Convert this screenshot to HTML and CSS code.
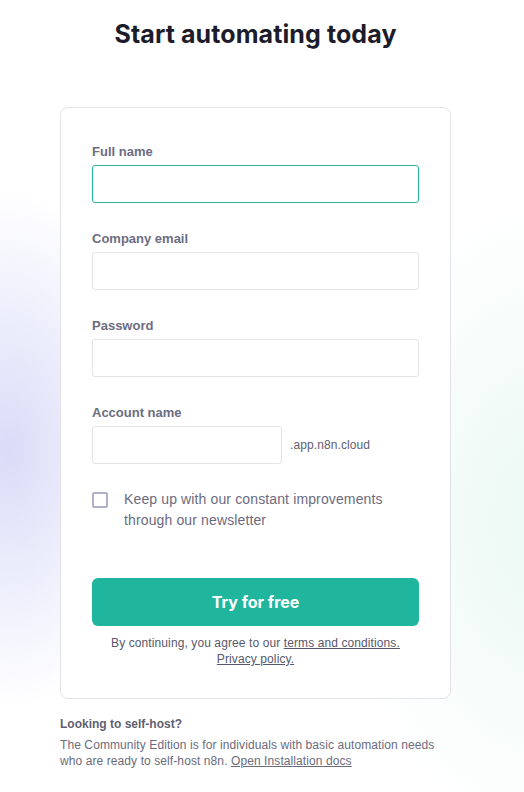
FILE: index.html
```html
<!DOCTYPE html>
<html lang="en">
<head>
<meta charset="utf-8">
<title>Start automating today</title>
<link rel="stylesheet" href="styles.css">
</head>
<body>
<main class="page">
  <h1 class="title">Start automating today</h1>
  <form class="card">
    <div class="field">
      <label class="label" for="fn">Full name</label>
      <input class="input input-focus" id="fn" type="text">
    </div>
    <div class="field">
      <label class="label" for="em">Company email</label>
      <input class="input" id="em" type="email">
    </div>
    <div class="field">
      <label class="label" for="pw">Password</label>
      <input class="input" id="pw" type="password">
    </div>
    <div class="field field-last">
      <label class="label" for="ac">Account name</label>
      <div class="account-row">
        <input class="input input-short" id="ac" type="text">
        <span class="suffix">.app.n8n.cloud</span>
      </div>
    </div>
    <label class="check-row">
      <span class="checkbox"></span>
      <span class="check-text">Keep up with our constant improvements through our newsletter</span>
    </label>
    <button class="btn" type="button">Try for free</button>
    <p class="terms">By continuing, you agree to our <a href="#">terms and conditions.</a><br><a href="#">Privacy policy.</a></p>
  </form>
  <section class="selfhost">
    <h2 class="sh-title">Looking to self-host?</h2>
    <p class="sh-text">The Community Edition is for individuals with basic automation needs who are ready to self-host n8n. <a href="#">Open Installation docs</a></p>
  </section>
</main>
</body>
</html>
```
FILE: styles.css
```css
* { box-sizing: border-box; }
html, body { margin: 0; height: 100%; }
body {
  font-family: "Liberation Sans", Arial, sans-serif;
  background:
    radial-gradient(ellipse 140px 260px at 10px 450px, rgba(205, 208, 245, 0.75), rgba(205, 208, 245, 0) 100%),
    radial-gradient(ellipse 200px 320px at 540px 520px, rgba(225, 245, 238, 0.7), rgba(225, 245, 238, 0) 100%),
    #ffffff;
  color: #6b6b80;
}
.page {
  width: 391px;
  margin-left: 60px;
  padding-top: 18px;
  padding-bottom: 20px;
}
.title {
  margin: 0;
  font-family: Inter, sans-serif;
  font-size: 25px;
  line-height: 32px;
  font-weight: 700;
  color: #1c1c2b;
  text-align: center;
  letter-spacing: 0.1px;
}
.card {
  margin-top: 57px;
  background: #ffffff;
  border: 1px solid #e3e3ea;
  border-radius: 8px;
  padding: 35px 31px 31px;
  display: flex;
  flex-direction: column;
}
.field {
  display: flex;
  flex-direction: column;
  margin-bottom: 27px;
}
.field-last { margin-bottom: 25px; }
.label {
  font-size: 13px;
  line-height: 16px;
  font-weight: 700;
  color: #6c6c82;
  margin-top: 1px;
  margin-bottom: 5px;
}
.input {
  width: 100%;
  height: 38px;
  border: 1px solid #e2e2e8;
  border-radius: 3px;
  background: #fff;
  outline: none;
  font: inherit;
}
.input-focus {
  border-color: #22b59c;
}
.account-row {
  display: flex;
  align-items: center;
  gap: 8px;
}
.input-short { width: 190px; }
.suffix {
  font-size: 12px;
  color: #5e5e72;
  letter-spacing: 0.1px;
}
.check-row {
  display: flex;
  align-items: flex-start;
  gap: 16px;
  cursor: pointer;
}
.checkbox {
  flex: none;
  width: 16px;
  height: 16px;
  margin-top: 3px;
  border: 2px solid #b0b0cc;
  border-radius: 2px;
}
.check-text {
  font-size: 14px;
  line-height: 21px;
  color: #6b6b80;
  width: 275px;
  letter-spacing: 0.13px;
}
.btn {
  margin-top: 47px;
  height: 48px;
  border: none;
  border-radius: 6px;
  background: #20b69e;
  color: #fff;
  font-family: Inter, sans-serif;
  font-size: 16px;
  font-weight: 700;
  cursor: pointer;
}
.terms {
  margin: 9px 0 0;
  font-size: 12px;
  line-height: 16px;
  color: #58586c;
  text-align: center;
  letter-spacing: 0.1px;
}
.terms a, .sh-text a { color: inherit; }
.selfhost { margin-top: 17px; }
.sh-title {
  margin: 0;
  font-size: 12px;
  line-height: 16px;
  font-weight: 700;
  color: #5f5f70;
}
.sh-text {
  margin: 5px 0 0;
  font-size: 12px;
  line-height: 16px;
  color: #6b6b7c;
  letter-spacing: 0.09px;
}
```
